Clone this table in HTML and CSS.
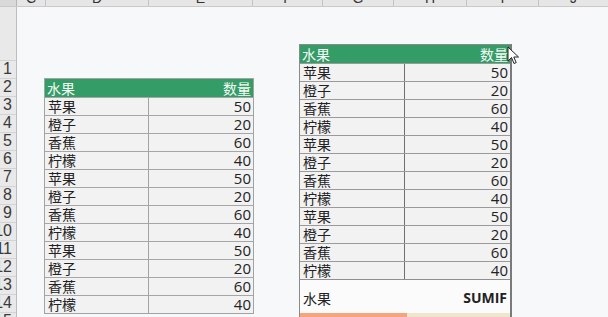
FILE: index.html
```html
<!DOCTYPE html>
<html lang="zh">
<head>
<meta charset="utf-8">
<link rel="stylesheet" href="styles.css">
</head>
<body>
<div class="app">
  <div class="colhdr">
    <div class="corner"></div>
    <div class="ch w-c"><span>C</span></div>
    <div class="ch w-d"><span>D</span></div>
    <div class="ch w-e"><span>E</span></div>
    <div class="ch w-f"><span>F</span></div>
    <div class="ch w-g"><span>G</span></div>
    <div class="ch w-h"><span>H</span></div>
    <div class="ch w-i"><span>I</span></div>
    <div class="ch w-j"><span>J</span></div>
  </div>
  <div class="body">
    <div class="rowhdr">
      <div class="rh blank"></div>
      <div class="rh"><span>1</span></div>
      <div class="rh"><span>2</span></div>
      <div class="rh"><span>3</span></div>
      <div class="rh"><span>4</span></div>
      <div class="rh"><span>5</span></div>
      <div class="rh"><span>6</span></div>
      <div class="rh"><span>7</span></div>
      <div class="rh"><span>8</span></div>
      <div class="rh"><span>9</span></div>
      <div class="rh"><span>10</span></div>
      <div class="rh"><span>11</span></div>
      <div class="rh"><span>12</span></div>
      <div class="rh"><span>13</span></div>
      <div class="rh"><span>14</span></div>
      <div class="rh"><span>15</span></div>
    </div>
    <div class="sheet">
      <div class="tbl left">
        <div class="hdr"><span>水果</span><span>数量</span></div>
        <div class="row"><div class="k">苹果</div><div class="v">50</div></div>
        <div class="row"><div class="k">橙子</div><div class="v">20</div></div>
        <div class="row"><div class="k">香蕉</div><div class="v">60</div></div>
        <div class="row"><div class="k">柠檬</div><div class="v">40</div></div>
        <div class="row"><div class="k">苹果</div><div class="v">50</div></div>
        <div class="row"><div class="k">橙子</div><div class="v">20</div></div>
        <div class="row"><div class="k">香蕉</div><div class="v">60</div></div>
        <div class="row"><div class="k">柠檬</div><div class="v">40</div></div>
        <div class="row"><div class="k">苹果</div><div class="v">50</div></div>
        <div class="row"><div class="k">橙子</div><div class="v">20</div></div>
        <div class="row"><div class="k">香蕉</div><div class="v">60</div></div>
        <div class="row"><div class="k">柠檬</div><div class="v">40</div></div>
      </div>
      <div class="panel">
        <div class="tbl right">
          <div class="hdr"><span>水果</span><span>数量</span></div>
          <div class="row"><div class="k">苹果</div><div class="v">50</div></div>
          <div class="row"><div class="k">橙子</div><div class="v">20</div></div>
          <div class="row"><div class="k">香蕉</div><div class="v">60</div></div>
          <div class="row"><div class="k">柠檬</div><div class="v">40</div></div>
          <div class="row"><div class="k">苹果</div><div class="v">50</div></div>
          <div class="row"><div class="k">橙子</div><div class="v">20</div></div>
          <div class="row"><div class="k">香蕉</div><div class="v">60</div></div>
          <div class="row"><div class="k">柠檬</div><div class="v">40</div></div>
          <div class="row"><div class="k">苹果</div><div class="v">50</div></div>
          <div class="row"><div class="k">橙子</div><div class="v">20</div></div>
          <div class="row"><div class="k">香蕉</div><div class="v">60</div></div>
          <div class="row"><div class="k">柠檬</div><div class="v">40</div></div>
        </div>
        <div class="sum"><span class="sk">水果</span><span class="sv">SUMIF</span></div>
        <div class="bar"><div class="orange"></div><div class="beige"></div></div>
      </div>
    </div>
  </div>
  <svg class="cursor" width="14" height="20" viewBox="0 0 14 20">
    <path d="M1 1 L1 15 L4.5 11.5 L7 17.5 L9.2 16.6 L6.8 11 L11.5 11 Z" fill="#fff" stroke="#222" stroke-width="1" stroke-linejoin="round"/>
  </svg>
</div>
</body>
</html>
```

FILE: styles.css
```css
html, body {
  margin: 0;
  padding: 0;
}
body {
  width: 608px;
  height: 317px;
  overflow: hidden;
  background: #f7f8fa;
  font-family: "Noto Sans CJK SC", "Liberation Sans", sans-serif;
}
.app {
  position: relative;
  width: 608px;
  height: 317px;
  overflow: hidden;
}
.colhdr {
  display: flex;
  height: 7px;
  background: #e6e6e6;
  border-bottom: 1px solid #c9c9c9;
  box-sizing: border-box;
  overflow: hidden;
}
.corner {
  width: 17px;
  flex: none;
  background: #d9d9d9;
  border-right: 1px solid #b5b5b5;
  box-sizing: border-box;
}
.ch {
  flex: none;
  box-sizing: border-box;
  border-right: 1px solid #c4c4c4;
  display: flex;
  justify-content: center;
  overflow: hidden;
}
.ch span {
  display: block;
  margin-top: -9px;
  font-family: "Liberation Sans", sans-serif;
  font-size: 14px;
  line-height: 14px;
  color: #333;
}
.w-c { width: 29px; }
.w-d { width: 103px; }
.w-e { width: 104px; }
.w-f { width: 70px; }
.w-g { width: 71px; }
.w-h { width: 73px; }
.w-i { width: 72px; }
.w-j { width: 70px; }

.body {
  display: flex;
  height: 310px;
}
.rowhdr {
  width: 17px;
  flex: none;
  background: #e9e9e9;
  border-right: 1px solid #bdbdbd;
  box-sizing: border-box;
  overflow: hidden;
}
.rh {
  height: 18px;
  box-sizing: border-box;
  border-bottom: 1px solid #d3d3d3;
  display: flex;
  justify-content: flex-end;
  align-items: center;
  padding-right: 4px;
  overflow: hidden;
  font-family: "Liberation Sans", sans-serif;
  font-size: 16px;
  line-height: 17px;
  color: #3a3a3a;
}
.rh span {
  flex: none;
  margin-top: -3px;
}
.rh.blank { height: 54px; }

.sheet {
  display: flex;
  align-items: flex-start;
  flex: 1;
}
.tbl {
  box-sizing: border-box;
  background: #f2f2f2;
}
.tbl.left {
  margin-left: 27px;
  margin-top: 71px;
  width: 210px;
  border: 1px solid #a3a3a3;
}
.hdr {
  height: 18px;
  background: #349c67;
  color: #f4fbf6;
  display: flex;
  justify-content: space-between;
  align-items: center;
  padding: 0 2px;
  font-size: 14px;
  line-height: 17px;
}
.row {
  height: 18px;
  box-sizing: border-box;
  border-top: 1px solid #a6a6a6;
  display: grid;
  grid-template-columns: 104px 1fr;
  overflow: hidden;
}
.k {
  border-right: 1px solid #a3a3a3;
  padding-left: 3px;
  font-size: 14px;
  line-height: 17px;
  color: #222;
  overflow: hidden;
}
.v {
  text-align: right;
  padding-right: 2px;
  font-family: "Open Sans", "Liberation Sans", sans-serif;
  font-size: 15px;
  line-height: 17px;
  color: #222;
}
.panel {
  margin-left: 45px;
  margin-top: 37px;
  width: 213px;
  height: 290px;
  box-sizing: border-box;
  border: 1px solid #8a8a8a;
  border-right: 2px solid #7a7a7a;
  background: #fbfbfb;
  display: flex;
  flex-direction: column;
}
.tbl.right {
  width: 210px;
  border-bottom: 1px solid #8f8f8f;
}
.tbl.right .row {
  grid-template-columns: 105px 1fr;
  border-top-color: #9a9a9a;
}
.tbl.right .k {
  border-right-color: #6f6f6f;
}
.sum {
  height: 33px;
  display: flex;
  justify-content: space-between;
  align-items: flex-end;
  padding: 0 3px 6px 3px;
  box-sizing: border-box;
}
.sk {
  font-size: 14px;
  line-height: 18px;
  color: #222;
}
.sv {
  font-family: "Open Sans", "Liberation Sans", sans-serif;
  font-weight: 700;
  font-size: 14px;
  line-height: 18px;
  color: #222;
}
.bar {
  display: flex;
  height: 6px;
}
.orange {
  width: 107px;
  background: #f5a47c;
}
.beige {
  flex: 1;
  background: #efe6cd;
}
.cursor {
  position: absolute;
  left: 507px;
  top: 46px;
}
```
